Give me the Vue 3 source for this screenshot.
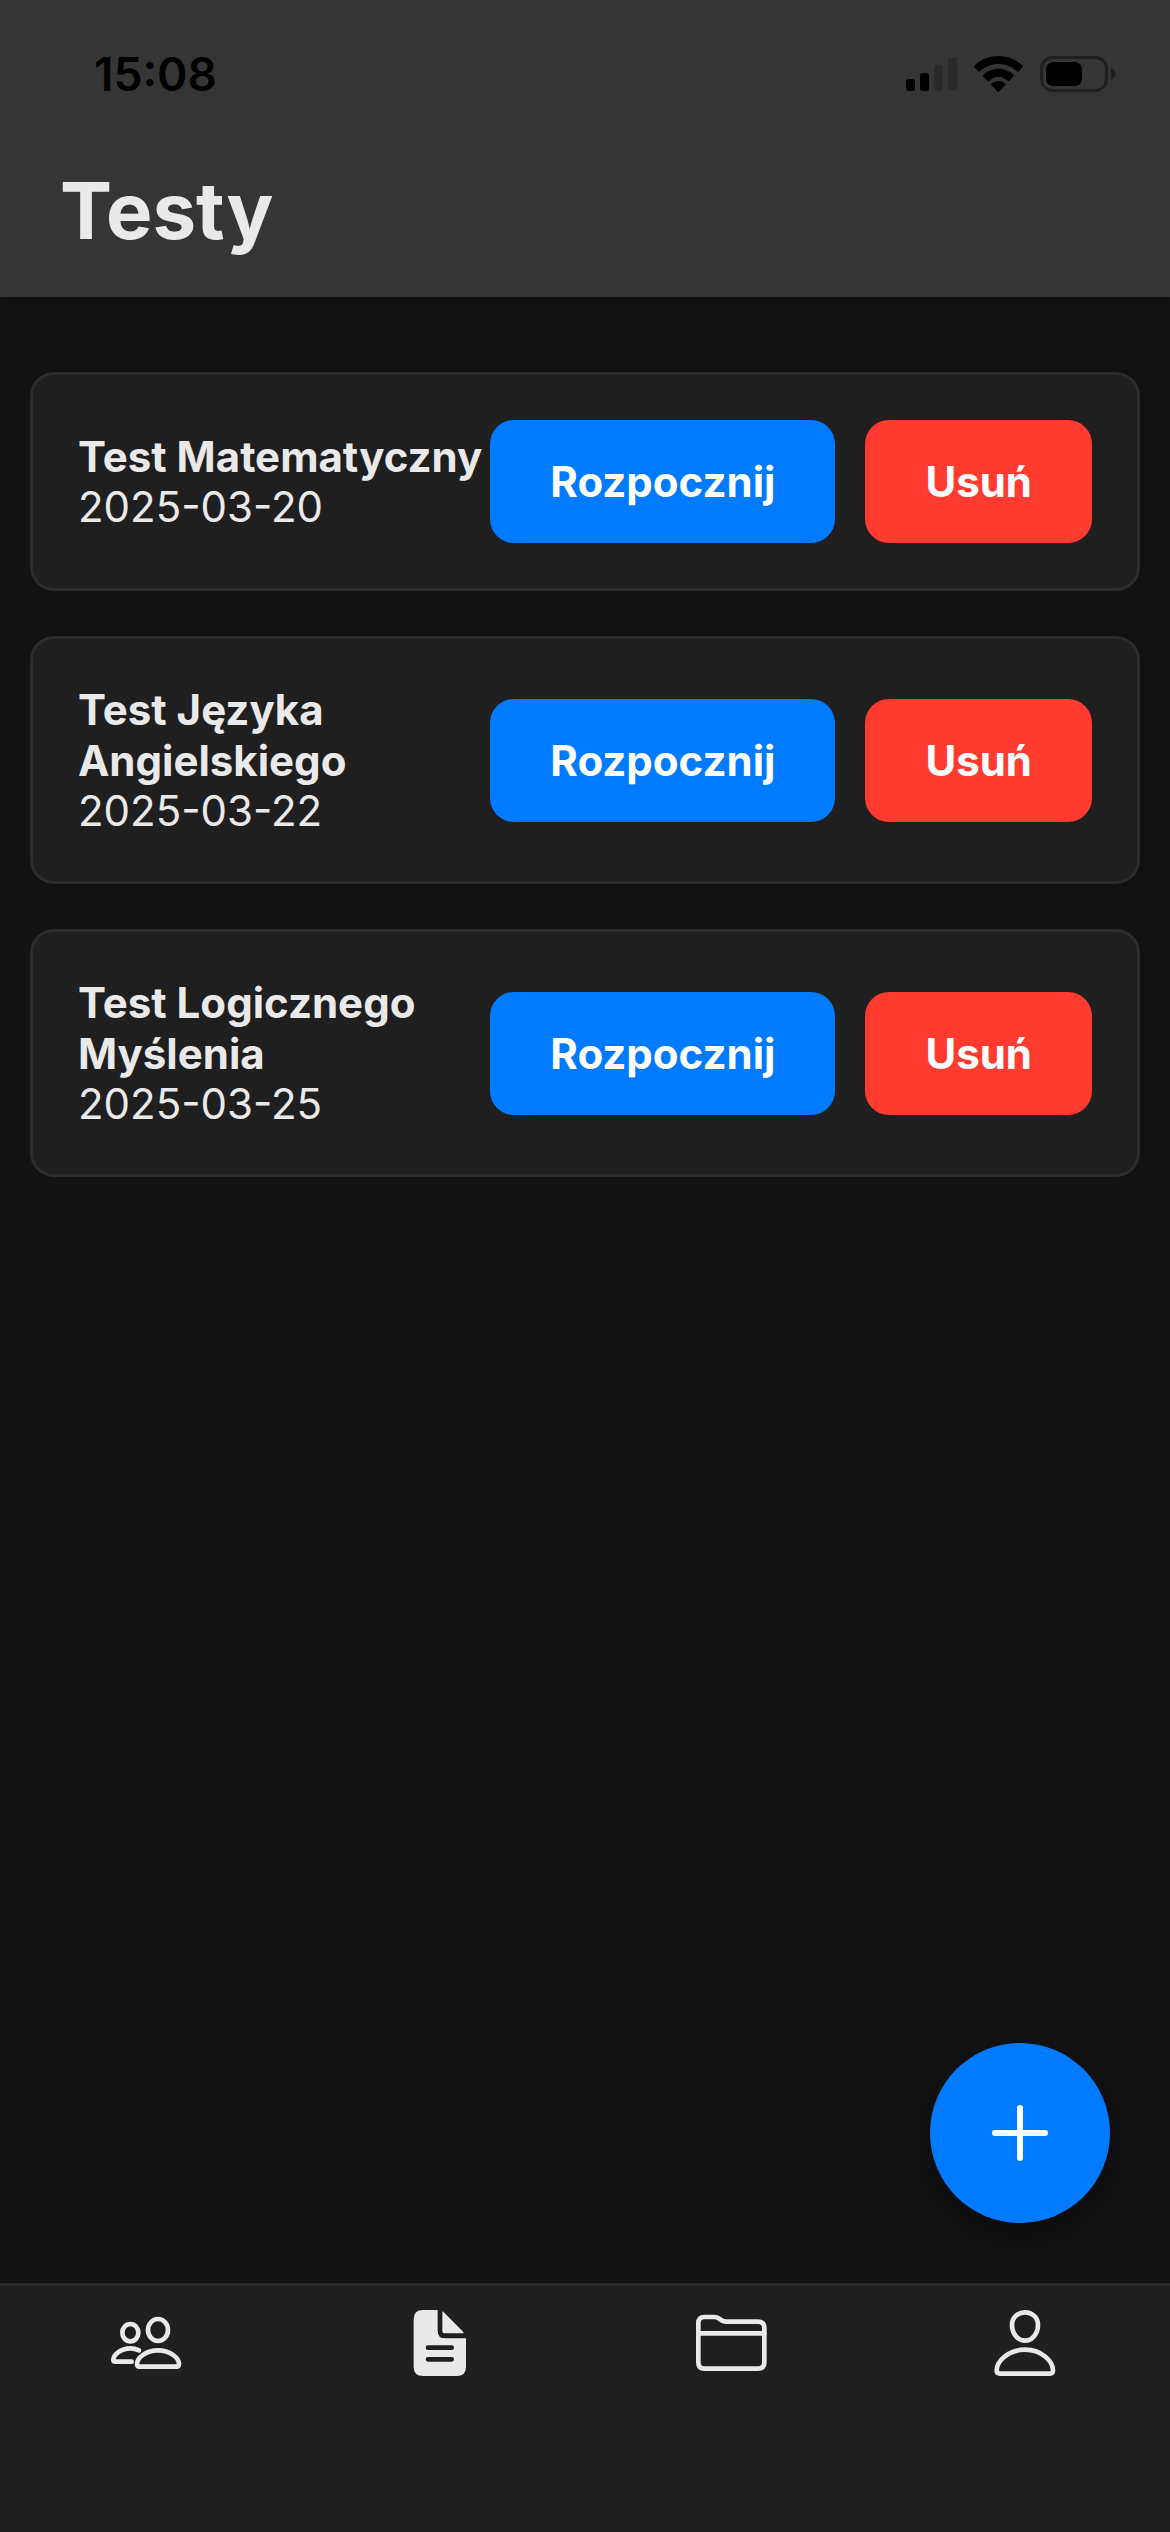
<script setup>
import { ref } from 'vue'

const tests = ref([
  { id: 1, title: 'Test Matematyczny', date: '2025-03-20' },
  { id: 2, title: 'Test Języka Angielskiego', date: '2025-03-22' },
  { id: 3, title: 'Test Logicznego Myślenia', date: '2025-03-25' },
])

function removeTest(id) {
  tests.value = tests.value.filter((test) => test.id !== id)
}
</script>

<template>
  <div class="page">
    <header class="header">
      <div class="status">
        <span class="time">15:08</span>
        <div class="indicators">
          <svg class="signal" viewBox="0 0 51 36" aria-hidden="true">
            <rect x="0" y="23" width="9" height="12" rx="3" />
            <rect x="14" y="17" width="9" height="18" rx="3" />
            <rect x="28" y="9" width="9" height="26" rx="3" fill-opacity="0.2" />
            <rect x="42" y="1" width="9" height="34" rx="3" fill-opacity="0.2" />
          </svg>
          <svg class="wifi" viewBox="0 0 147 108" aria-hidden="true">
            <path d="M73 0C101 0 127 11 146 29Q148 32 146 34L134 46Q132 48 129 46C114 32 94 24 73 24S33 32 18 46Q15 48 13 46L1 34Q-1 32 1 29C20 11 45 0 73 0Z" />
            <path d="M73 38C91 38 107 45 119 56Q122 59 119 61L106 74Q104 76 101 74C93 67 84 62 73 62S53 67 46 74Q43 76 41 74L27 61Q25 59 28 56C40 45 56 38 73 38Z" />
            <path d="M73 75C81 75 88 78 93 82Q96 85 93 88L75 107Q73 109 71 107L53 88Q50 85 53 82C58 78 65 75 73 75Z" />
          </svg>
          <svg class="battery" viewBox="0 0 76 36" aria-hidden="true">
            <rect x="1.5" y="1.5" width="65" height="33" rx="11" fill="none" stroke="#000" stroke-width="3" stroke-opacity="0.4" />
            <rect x="6" y="6" width="36" height="24" rx="7" />
            <path d="M71 12C77 14 77 22 71 24Z" fill-opacity="0.4" />
          </svg>
        </div>
      </div>
      <h1 class="title">Testy</h1>
    </header>

    <main class="content">
      <ul class="list">
        <li v-for="test in tests" :key="test.id" class="card">
          <div class="info">
            <h2 class="name">{{ test.title }}</h2>
            <time class="date" :datetime="test.date">{{ test.date }}</time>
          </div>
          <div class="actions">
            <button type="button" class="btn start">Rozpocznij</button>
            <button type="button" class="btn remove" @click="removeTest(test.id)">Usuń</button>
          </div>
        </li>
      </ul>
      <button type="button" class="fab" aria-label="Dodaj test">
        <svg viewBox="0 0 56 56" aria-hidden="true">
          <path d="M28 3V53M3 28H53" fill="none" stroke="#fff" stroke-width="6" stroke-linecap="round" />
        </svg>
      </button>
    </main>

    <nav class="tabs">
      <a href="#grupy" class="tab" aria-label="Grupy">
        <svg viewBox="43 93 252 252" aria-hidden="true">
          <g class="line">
            <ellipse cx="122" cy="188" rx="24" ry="26" />
            <ellipse cx="205" cy="180" rx="30" ry="33" />
            <path d="M205 241C169 241 142 264 142 282Q142 290 150 290H260Q268 290 268 282C268 264 241 241 205 241Z" />
            <path d="M148 241C140 237 131 235 122 235C92 235 71 256 71 269Q71 275 77 275H126" />
          </g>
        </svg>
      </a>
      <a href="#testy" class="tab" aria-label="Testy" aria-current="page">
        <svg viewBox="50 93 252 252" aria-hidden="true">
          <path class="solid" fill-rule="evenodd" d="M128 120H172V182Q172 205 195 205H257V290Q257 318 229 318H128Q100 318 100 290V148Q100 120 128 120ZM143 226A7 7 0 0 0 143 240H214A7 7 0 0 0 214 226ZM143 261A7 7 0 0 0 143 275H214A7 7 0 0 0 214 261Z" />
          <path class="solid" d="M186 124Q189 125 192 128L246 183Q249 186 250 190H194Q186 190 186 182Z" />
        </svg>
      </a>
      <a href="#pliki" class="tab" aria-label="Pliki">
        <svg viewBox="58 93 252 252" aria-hidden="true">
          <g class="line">
            <path d="M104 141H135C151 141 152 155 167 155H265Q284 155 284 174V277Q284 296 265 296H104Q86 296 86 277V160Q86 141 104 141Z" />
            <path d="M86 190H284" />
          </g>
        </svg>
      </a>
      <a href="#profil" class="tab" aria-label="Profil">
        <svg viewBox="50 93 252 252" aria-hidden="true">
          <g class="line">
            <path d="M179 127C201 127 218 143 218 165C218 190 201 212 179 212S140 190 140 165C140 143 157 127 179 127Z" />
            <path d="M179 239C130 239 94 273 94 301Q94 311 104 311H253Q263 311 263 301C263 273 228 239 179 239Z" />
          </g>
        </svg>
      </a>
    </nav>
  </div>
</template>

<style>
body {
  margin: 0;
  background: #121212;
}
</style>

<style scoped>
.page {
  display: flex;
  flex-direction: column;
  min-height: 100vh;
  color: #e9e9e9;
  background: #121212;
  font-family: Inter, 'Liberation Sans', sans-serif;
}

.header {
  background: #353535;
  box-shadow: 0 3px 12px rgba(0, 0, 0, 0.3);
}

.status {
  display: flex;
  align-items: center;
  justify-content: space-between;
  height: 148px;
  padding: 0 54px 0 94px;
  color: #000;
}

.time {
  font-size: 46px;
  font-weight: 600;
}

.indicators {
  display: flex;
  align-items: center;
  gap: 17px;
}

.signal {
  width: 51px;
  height: 36px;
}

.wifi {
  width: 49px;
  height: 36px;
}

.battery {
  width: 76px;
  height: 36px;
}

.title {
  margin: 0;
  padding: 13px 60px 36px;
  font-size: 78px;
  font-weight: 700;
  line-height: 100px;
}

.content {
  position: relative;
  flex: 1;
  padding: 75px 30px 240px;
}

.list {
  display: flex;
  flex-direction: column;
  gap: 45px;
  margin: 0;
  padding: 0;
  list-style: none;
}

.card {
  display: flex;
  align-items: center;
  padding: 45px;
  border: 3px solid #2c2c2c;
  border-radius: 24px;
  background: #1f1f1f;
}

.info {
  flex: 1;
  min-width: 0;
}

.name {
  margin: 0;
  font-size: 42px;
  font-weight: 700;
  line-height: 51px;
}

.date {
  display: block;
  font-size: 42px;
  line-height: 50px;
}

.actions {
  display: flex;
  gap: 30px;
}

.btn {
  padding: 36px 60px;
  border: 0;
  border-radius: 24px;
  color: #fff;
  font-family: inherit;
  font-size: 42px;
  font-weight: 700;
  line-height: 51px;
  cursor: pointer;
}

.start {
  background: #007bff;
}

.remove {
  background: #ff3b30;
}

.fab {
  position: absolute;
  right: 60px;
  bottom: 60px;
  display: grid;
  place-items: center;
  width: 180px;
  height: 180px;
  padding: 0;
  border: 0;
  border-radius: 50%;
  background: #007bff;
  box-shadow: 0 12px 30px rgba(0, 0, 0, 0.4);
  cursor: pointer;
}

.fab svg {
  width: 56px;
  height: 56px;
}

.tabs {
  display: flex;
  padding: 15px 0 147px;
  border-top: 3px solid #2c2c2c;
  background: #1f1f1f;
}

.tab {
  display: flex;
  flex: 1;
  justify-content: center;
}

.tab svg {
  width: 84px;
  height: 84px;
}

.line {
  fill: none;
  stroke: #e9e9e9;
  stroke-width: 14px;
  stroke-linecap: round;
  stroke-linejoin: round;
}

.solid {
  fill: #e9e9e9;
}
</style>
